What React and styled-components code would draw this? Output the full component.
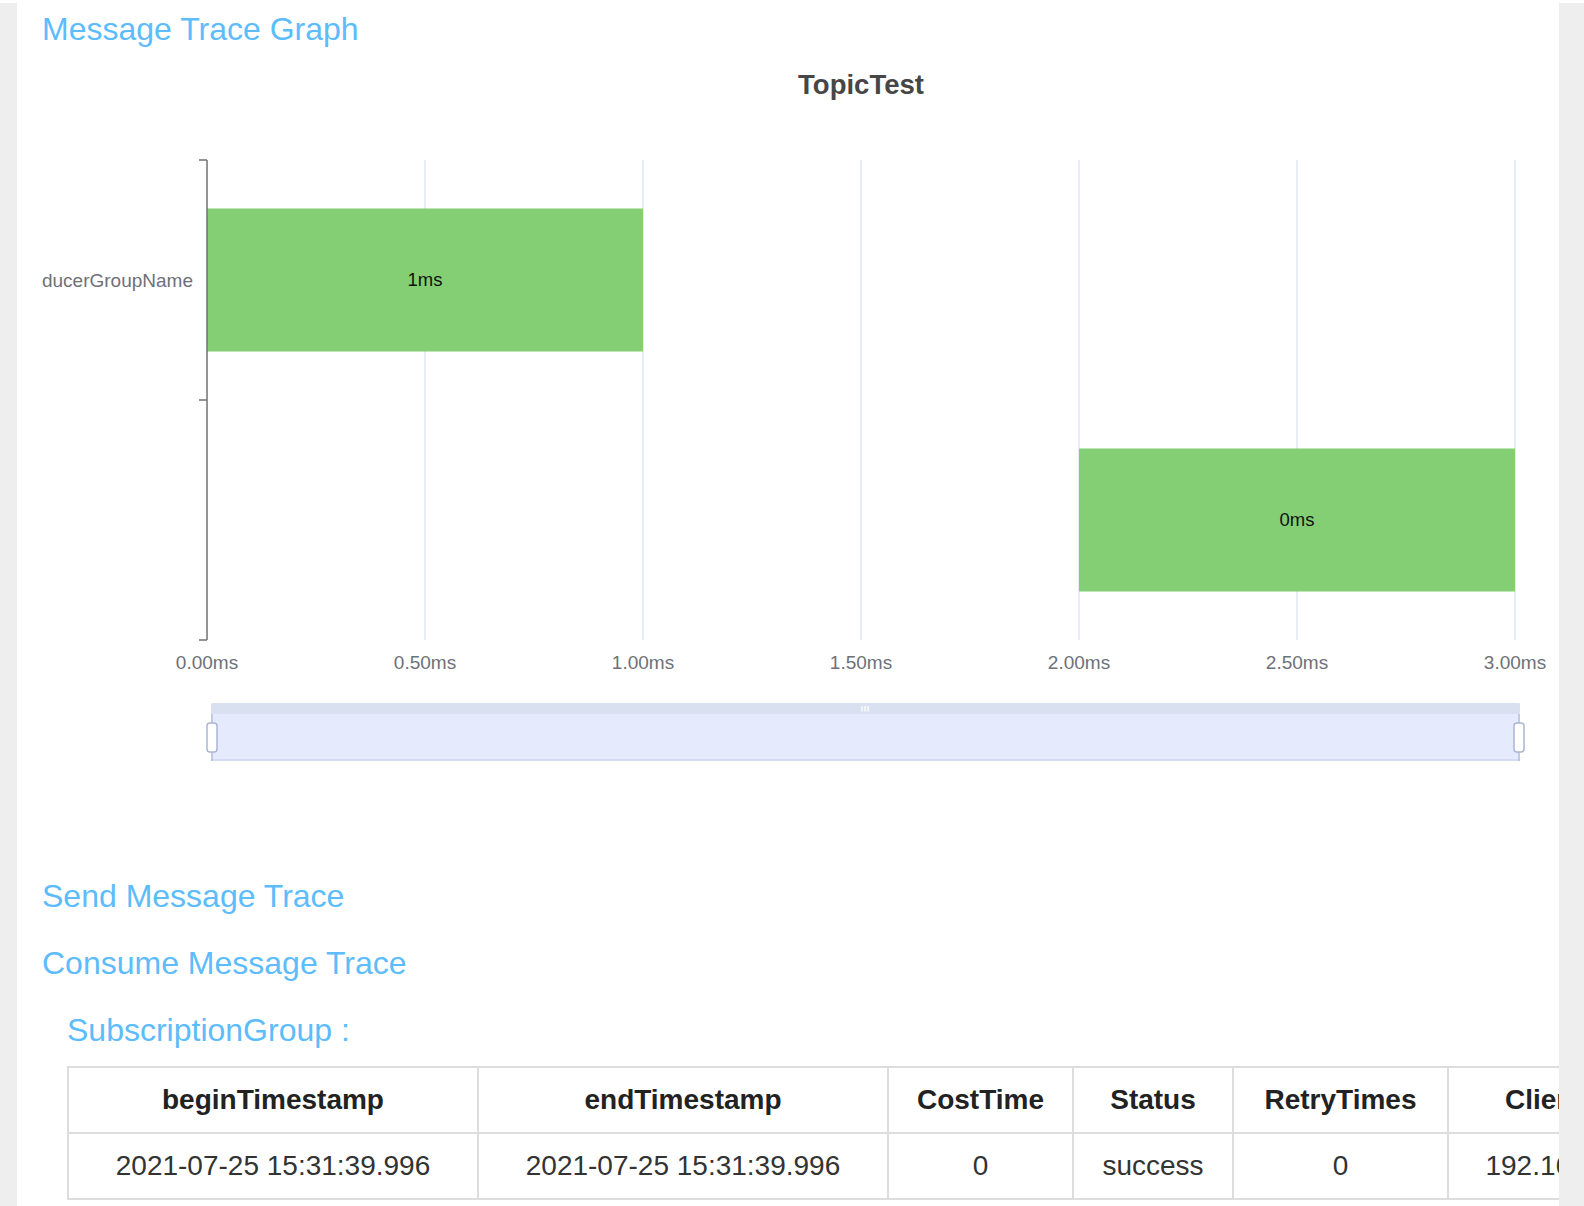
import styled, { createGlobalStyle } from "styled-components";

const GlobalStyle = createGlobalStyle`
  html, body {
    margin: 0;
    padding: 0;
    background: #fff;
  }
  body {
    font-family: "Liberation Sans", Arial, sans-serif;
  }
`;

const Frame = styled.div`
  display: flex;
  margin-top: 3px;
  min-height: 1203px;
  padding: 0 25px 0 17px;
  background: #eeeeee;
`;

const Main = styled.div`
  flex: 1;
  min-width: 0;
  background: #fff;
  padding: 6px 0 0 25px;
  overflow: hidden;
`;

const Heading = styled.h2`
  margin: ${(p) => p.$top || 0}px 0 0 ${(p) => p.$indent || 0}px;
  font-size: 32px;
  line-height: 40px;
  font-weight: 400;
  color: #5dbcfb;
`;

const ChartSvg = styled.svg`
  display: block;
  width: 1517px;
  height: 790px;
`;

const Table = styled.table`
  margin: 16px 0 0 25px;
  border-collapse: collapse;
  table-layout: fixed;
  width: 1630px;
  font-size: 28px;
  color: #333;
`;

const Th = styled.th`
  width: ${(p) => p.$w}px;
  height: 62px;
  border: 2px solid #dddddd;
  font-weight: 700;
  text-align: center;
  vertical-align: middle;
  white-space: nowrap;
  color: #222;
`;

const Td = styled.td`
  height: 62px;
  border: 2px solid #dddddd;
  text-align: center;
  vertical-align: middle;
  white-space: nowrap;
`;

const X0 = 207;
const STEP = 218;
const ticks = ["0.00ms", "0.50ms", "1.00ms", "1.50ms", "2.00ms", "2.50ms", "3.00ms"].map(
  (label, i) => ({ x: X0 + i * STEP, label })
);

const bars = [
  { x1: 207, x2: 643, cy: 280, label: "1ms" },
  { x1: 1079, x2: 1515, cy: 520, label: "0ms" },
];

function TraceChart() {
  return (
    <ChartSvg viewBox="0 0 1517 790">
      <g transform="translate(-42 -49)" fontFamily="Liberation Sans, Arial, sans-serif">
        <text x="861" y="94" textAnchor="middle" fontSize="27.5" fontWeight="700" fill="#464646">
          TopicTest
        </text>

        {ticks.slice(1).map((t) => (
          <line key={t.x} x1={t.x} y1="160" x2={t.x} y2="640" stroke="#e0e6f1" strokeWidth="1.5" />
        ))}

        {bars.map((b) => (
          <g key={b.label}>
            <rect x={b.x1} y={b.cy - 71.5} width={b.x2 - b.x1} height="143" fill="#84cf73" />
            <text x={(b.x1 + b.x2) / 2} y={b.cy + 6} textAnchor="middle" fontSize="18.5" fill="#111">
              {b.label}
            </text>
          </g>
        ))}

        <line x1="207" y1="160" x2="207" y2="640" stroke="#6e7079" strokeWidth="1.5" />
        {[160, 400, 640].map((y) => (
          <line key={y} x1="199" y1={y} x2="207" y2={y} stroke="#6e7079" strokeWidth="1.5" />
        ))}
        <text x="193" y="287" textAnchor="end" fontSize="19" fill="#6e7079">
          ProducerGroupName
        </text>

        {ticks.map((t) => (
          <text key={t.label} x={t.x} y="669" textAnchor="middle" fontSize="19" fill="#6e7079">
            {t.label}
          </text>
        ))}

        {/* data zoom slider */}
        <rect x="211" y="703" width="1309" height="58" fill="#e5ebfd" />
        <path d="M211 714 V706 Q211 703 214 703 H1517 Q1520 703 1520 706 V714 Z" fill="#d9e0ef" />
        <line x1="211" y1="760" x2="1520" y2="760" stroke="#cdd7f0" strokeWidth="1.5" />
        <line x1="212" y1="714" x2="212" y2="761" stroke="#aab6d3" strokeWidth="1.2" />
        <line x1="1519" y1="714" x2="1519" y2="761" stroke="#aab6d3" strokeWidth="1.2" />
        <rect x="207" y="723" width="10" height="29" rx="3" fill="#fff" stroke="#aab6d3" strokeWidth="1.5" />
        <rect x="1514" y="723" width="10" height="29" rx="3" fill="#fff" stroke="#aab6d3" strokeWidth="1.5" />
        {[862, 865, 868].map((x) => (
          <line key={x} x1={x} y1="706" x2={x} y2="711.5" stroke="#fff" strokeWidth="1.3" />
        ))}
      </g>
    </ChartSvg>
  );
}

const columns = [
  { title: "beginTimestamp", w: 406, value: "2021-07-25 15:31:39.996" },
  { title: "endTimestamp", w: 406, value: "2021-07-25 15:31:39.996" },
  { title: "CostTime", w: 181, value: "0" },
  { title: "Status", w: 156, value: "success" },
  { title: "RetryTimes", w: 211, value: "0" },
  { title: "ClientHost", w: 250, value: "192.168.0.101" },
];

export default function App() {
  return (
    <>
      <GlobalStyle />
      <Frame>
        <Main>
          <Heading>Message Trace Graph</Heading>
          <TraceChart />
          <Heading $top={37}>Send Message Trace</Heading>
          <Heading $top={27}>Consume Message Trace</Heading>
          <Heading $top={27} $indent={25}>SubscriptionGroup :</Heading>
          <Table>
            <thead>
              <tr>
                {columns.map((c) => (
                  <Th key={c.title} $w={c.w}>{c.title}</Th>
                ))}
              </tr>
            </thead>
            <tbody>
              <tr>
                {columns.map((c) => (
                  <Td key={c.title}>{c.value}</Td>
                ))}
              </tr>
            </tbody>
          </Table>
        </Main>
      </Frame>
    </>
  );
}
